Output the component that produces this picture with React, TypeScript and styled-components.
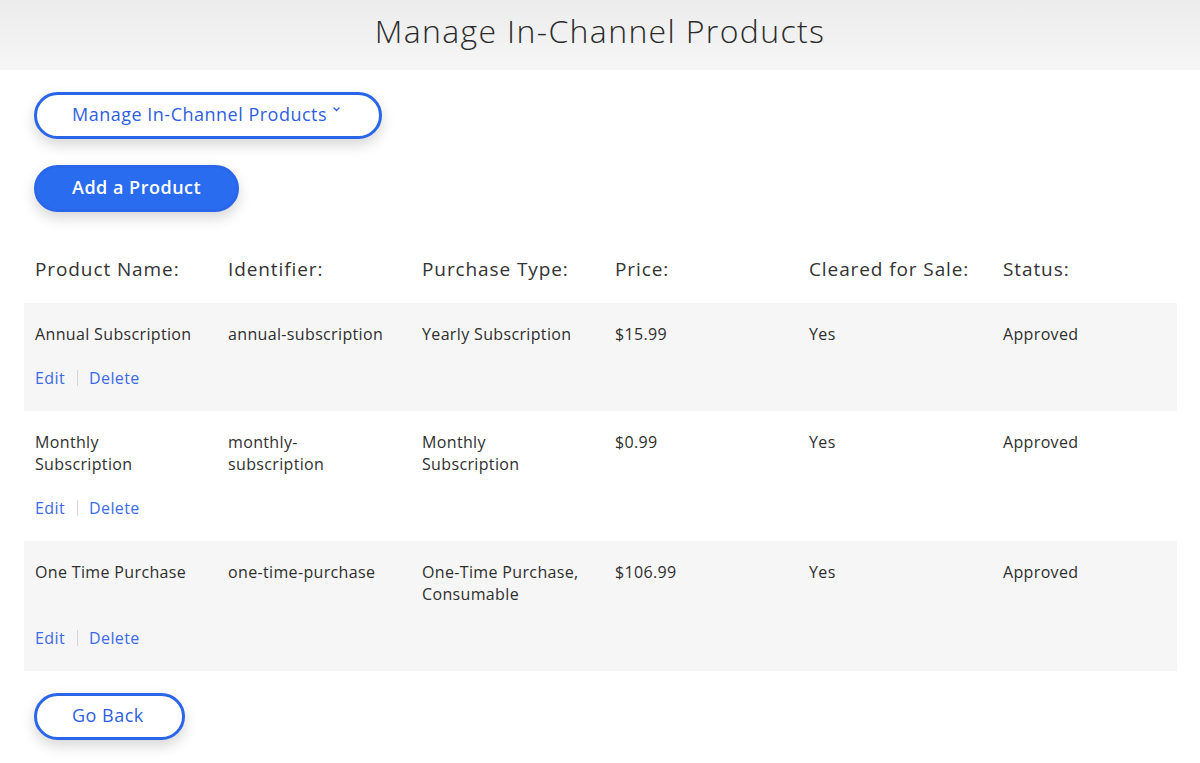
import React from "react";
import styled, { createGlobalStyle } from "styled-components";

const Global = createGlobalStyle`
  html, body { margin: 0; padding: 0; background: #fff; }
  body { font-family: "Open Sans", "Liberation Sans", sans-serif; color: #333; }
  * { box-sizing: border-box; }
`;

const Page = styled.div`
  width: 1200px;
  min-height: 763px;
  display: flex;
  flex-direction: column;
`;

const Header = styled.header`
  height: 70px;
  background: linear-gradient(#ececec, #f6f6f6);
  display: flex;
  align-items: center;
  justify-content: center;
  padding-bottom: 9px;
`;

const Title = styled.h1`
  margin: 0;
  font-family: "Open Sans", sans-serif;
  font-weight: 300;
  font-size: 32px;
  letter-spacing: 1.35px;
  color: #2b2b2b;
`;

const Content = styled.main`
  padding: 22px 23px 0 24px;
  display: flex;
  flex-direction: column;
`;

const PillButton = styled.button<{ $filled?: boolean; $padRight?: number }>`
  align-self: flex-start;
  margin-left: 10px;
  height: 47px;
  padding: 0 ${(p) => p.$padRight ?? 35}px 3px 35px;
  border-radius: 24px;
  border: 3px solid #2a66ea;
  background: ${(p) => (p.$filled ? "#2a6cf0" : "#fff")};
  color: ${(p) => (p.$filled ? "#fff" : "#2f5fe0")};
  font-family: "Open Sans", sans-serif;
  font-size: 18px;
  letter-spacing: 0.5px;
  font-weight: ${(p) => (p.$filled ? 600 : 400)};
  box-shadow: 0 6px 14px rgba(0, 0, 0, 0.16);
  display: flex;
  align-items: center;
  gap: 6px;
  cursor: pointer;
`;

const Caret = styled.svg`
  width: 7px;
  height: 5px;
  margin-top: -9px;
  margin-right: 4px;
`;

const Table = styled.div`
  margin-top: 26px;
  display: flex;
  flex-direction: column;
`;

const Grid = styled.div<{ $shade?: boolean; $head?: boolean }>`
  display: grid;
  grid-template-columns: 193px 194px 193px 194px 194px 1fr;
  padding: ${(p) => (p.$head ? "0 0 0 11px" : "20px 0 22px 11px")};
  height: ${(p) => (p.$head ? "65px" : "auto")};
  align-items: ${(p) => (p.$head ? "center" : "start")};
  background: ${(p) => (p.$shade ? "#f6f6f6" : "transparent")};
`;

const HeadCell = styled.div`
  font-size: 19px;
  letter-spacing: 0.9px;
  color: #333;
  padding-bottom: 4px;
`;

const Cell = styled.div`
  font-size: 16px;
  letter-spacing: 0.35px;
  line-height: 22.5px;
  color: #2f2f2f;
  max-width: 161px;
`;

const Actions = styled.div`
  grid-column: 1 / -1;
  display: flex;
  align-items: center;
  margin-top: 21px;
  height: 22px;
  font-size: 16px;
  letter-spacing: 0.4px;
`;

const LinkText = styled.a`
  color: #3c6be8;
  text-decoration: none;
  cursor: pointer;
`;

const Divider = styled.span`
  width: 1px;
  height: 16px;
  background: #d6d6d6;
  margin: 0 11px 0 12px;
`;

const rows = [
  ["Annual Subscription", "annual-subscription", "Yearly Subscription", "$15.99", "Yes", "Approved"],
  ["Monthly Subscription", "monthly-subscription", "Monthly Subscription", "$0.99", "Yes", "Approved"],
  ["One Time Purchase", "one-time-purchase", "One-Time Purchase, Consumable", "$106.99", "Yes", "Approved"],
];

const heads = ["Product Name:", "Identifier:", "Purchase Type:", "Price:", "Cleared for Sale:", "Status:"];

const Spacer = styled.div<{ $h: number }>`
  height: ${(p) => p.$h}px;
`;

export default function App() {
  return (
    <Page>
      <Global />
      <Header>
        <Title>Manage In-Channel Products</Title>
      </Header>
      <Content>
        <PillButton>
          Manage In-Channel Products
          <Caret viewBox="0 0 7 5">
            <path d="M1 1l2.5 2.5L6 1" fill="none" stroke="#2f5fe0" strokeWidth="1.3" strokeLinecap="round" />
          </Caret>
        </PillButton>
        <Spacer $h={26} />
        <PillButton $filled>Add a Product</PillButton>
        <Table>
          <Grid $head>
            {heads.map((h) => (
              <HeadCell key={h}>{h}</HeadCell>
            ))}
          </Grid>
          {rows.map((r, i) => (
            <Grid key={i} $shade={i % 2 === 0}>
              {r.map((c, j) => (
                <Cell key={j}>{c}</Cell>
              ))}
              <Actions>
                <LinkText>Edit</LinkText>
                <Divider />
                <LinkText>Delete</LinkText>
              </Actions>
            </Grid>
          ))}
        </Table>
        <Spacer $h={22} />
        <PillButton $padRight={38}>Go Back</PillButton>
      </Content>
    </Page>
  );
}
